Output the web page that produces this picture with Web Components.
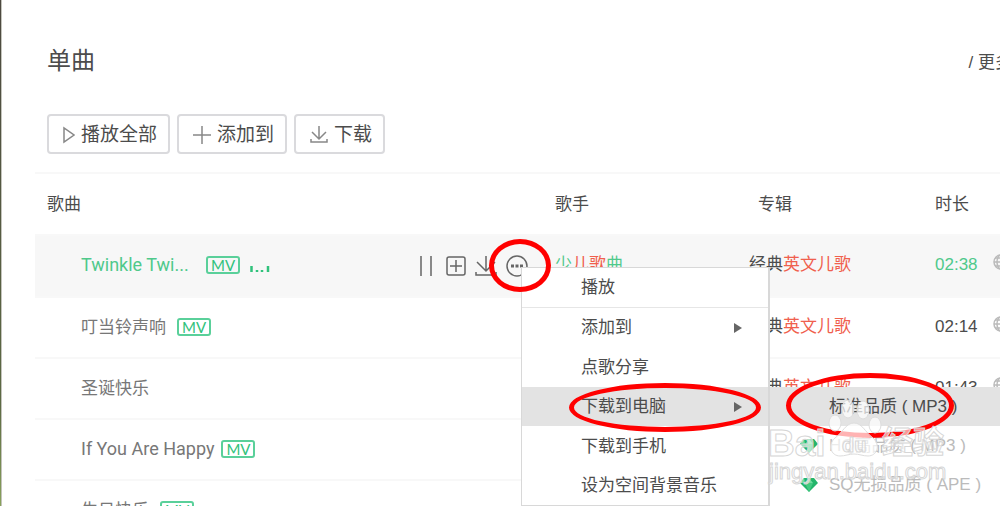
<!DOCTYPE html>
<html lang="zh-CN">
<head>
<meta charset="utf-8">
<title>单曲</title>
<style>
body{margin:0;height:100vh;overflow:hidden;background:#fff;font:17px/24px "Liberation Sans","Noto Sans CJK SC",sans-serif;color:#4c4c4c}
</style>
</head>
<body>
<music-page></music-page>
<script>
const define=(name,html,init)=>customElements.define(name,class extends HTMLElement{
  constructor(){super();const r=this.attachShadow({mode:'open'});r.innerHTML=html;this.root=r;}
  connectedCallback(){if(init&&!this.ready){this.ready=true;init(this,this.root);}}
});

const ICONS={
  play:[12,18,'<path d="M1 2v14l10-7z"/>'],
  plus:[18,18,'<path d="M9 0v18M0 9h18"/>'],
  down:[18,18,'<path d="M9 0v13M2 6l7 7 7-7M1 13v3h16v-3"/>'],
  pause:[12,20,'<path d="M1 0v20M11 0v20"/>'],
  add:[20,20,'<rect x="1" y="1" width="18" height="18" rx="2"/><path d="M10 4v12M4 10h12"/>'],
  get:[22,20,'<path d="M11 0v15M2 6l9 9 9-9M1 16v3h20v-3"/>'],
  more:[22,22,'<circle cx="11" cy="11" r="10"/><path stroke-width="3" d="M5 11h3M9.500 11h3M14 11h3"/>'],
  globe:[16,16,'<circle cx="8" cy="8" r="7"/><path d="M1 8h14M8 1v14M2 4h12M2 12h12"/><ellipse cx="8" cy="8" rx="4" ry="7"/>'],
  arrow:[8,12,'<path d="M0 1l8 5-8 5z" fill="#666" stroke="none"/>'],
  wave:[20,20,'<path d="M1.500 11v6M7 15v2M12 15v2M18 11v6" stroke="#31c27c" stroke-width="2.500"/>'],
  gem:[18,16,'<g stroke="none"><path d="M4 1h10l4 5-9 9-9-9z" fill="#23b56b"/><path d="M4 1l-4 5h5zM9 1L5 6h8z" fill="#6fdc9f"/><path d="M5 6h8l-4 9z" fill="#43ca82"/></g>']
};
define('line-icon','<style>:host{display:inline-flex;flex:none}svg{display:block;fill:none;stroke:currentColor;stroke-width:1.500}</style><svg aria-hidden="true"></svg>',(el,r)=>{
  const [w,h,d]=ICONS[el.getAttribute('name')];const s=r.querySelector('svg');
  s.setAttribute('width',w);s.setAttribute('height',h);s.setAttribute('viewBox',`0 0 ${w} ${h}`);s.innerHTML=d;
});

define('tool-button',`<style>
:host{display:block}
button{box-sizing:border-box;height:40px;display:flex;align-items:center;gap:6px;padding:1px 11px 0 14px;border:2px solid #dadadd;border-radius:4px;background:#fff;font:inherit;font-size:19px;color:#4c4c4c;white-space:nowrap}
line-icon{color:#888}
</style><button type="button"><slot></slot></button>`,(el,r)=>{
  const i=document.createElement('line-icon');i.setAttribute('name',el.getAttribute('icon'));r.querySelector('button').prepend(i);
});

define('mv-badge',`<style>:host{display:inline-block;flex:none}
a{box-sizing:border-box;display:block;width:34px;height:18px;border:2px solid #5ad09a;border-radius:3px;text-align:center;text-decoration:none;font:15px/14px Lato,sans-serif;color:#31c27c}
</style><a href="#mv">MV</a>`);

define('song-table',`<style>
:host{display:block}
table{width:100%;table-layout:fixed;border-collapse:collapse;text-align:left}
th,td{box-sizing:border-box;height:61px;padding:0 0 2px;font-weight:400;white-space:nowrap;border-top:2px solid #f8f8f8;vertical-align:middle}
th{height:62px;padding:2px 0 0}
.on td{height:62px}
col.song{width:508px}col.artist{width:206px}col.album{width:186px}col.time{width:58px}
th:first-child{padding-left:12px}
th:nth-child(2),td:nth-child(2){padding-left:12px}
th:nth-child(3){padding-left:9px}
td:first-child{padding-left:46px;color:#777}
.cell{display:flex;align-items:center}
.name{margin-right:11px;font-family:Roboto,"Noto Sans CJK SC",sans-serif}
.latin{font-size:18px;margin-right:7px}
.on .name{width:118px}
.on{background:#f7f7f7}
.on td:first-child,.on td:nth-child(2),.on td:nth-child(4){color:#4fc98b}
em{font-style:normal;color:#f0604d}
line-icon.wave{margin-left:10px}
line-icon.globe{color:#bbb}
.tools{display:flex;align-items:center;gap:9px;margin-left:auto;margin-right:15px;padding-top:2px;color:#666}
a{color:inherit;text-decoration:none}
button{border:0;background:none;padding:0;color:inherit;display:flex}
.tools button:first-child{margin-right:5px}
</style>
<table><colgroup><col class="song"><col class="artist"><col class="album"><col class="time"><col></colgroup>
<thead><tr><th>歌曲</th><th>歌手</th><th>专辑</th><th>时长</th><th></th></tr></thead><tbody></tbody></table>`,(el,r)=>{
  const songs=[['Twinkle Twi...','02:38',1,1],['叮当铃声响','02:14',1],['圣诞快乐','01:43',0],['If You Are Happy','02:05',1],['生日快乐','01:52',1]];
  const tool=(n,l)=>`<button type="button" aria-label="${l}"><line-icon name="${n}"></line-icon></button>`;
  r.querySelector('tbody').innerHTML=songs.map(([n,t,mv,on])=>`<tr class="${on?'on':''}"><td><div class="cell"><a class="name ${/[a-z]/.test(n)?'latin':''}" href="#song">${n}</a>${mv?'<mv-badge></mv-badge>':''}${on?`<line-icon class="wave" name="wave"></line-icon><div class="tools">${tool('pause','暂停')}${tool('add','添加')}${tool('get','下载')}${tool('more','更多')}</div>`:''}</div></td><td><a href="#artist">少<em>儿歌</em>曲</a></td><td><a href="#album">经典<em>英文儿歌</em></a></td><td>${t}</td><td><line-icon class="globe" name="globe"></line-icon></td></tr>`).join('');
});

define('menu-item',`<style>
:host{display:flex;flex:1;position:relative}
button{flex:1;display:flex;align-items:center;padding:2px 26px 0 59px;border:0;background:none;font:inherit;color:inherit;white-space:nowrap;text-align:left}
:host([active]) button{background:#e3e3e3}
:host([lined]) button{border-bottom:1px solid #e6e6e6}
:host([off]){color:#bbb}
.more{margin-left:auto}
.gem{position:absolute;left:30px;top:12px}
</style><button type="button"><slot></slot></button><slot name="sub"></slot>`,(el,r)=>{
  const add=(n,c)=>{const i=document.createElement('line-icon');i.setAttribute('name',n);i.className=c;r.querySelector('button').append(i);};
  if(el.hasAttribute('more'))add('arrow','more');
  if(el.hasAttribute('gem'))add('gem','gem');
});
define('pop-menu',`<style>
:host{position:absolute;box-sizing:border-box;display:flex;flex-direction:column;background:#fff;border:1px solid #d8d8d8;border-right-width:2px}
</style><slot></slot>`);

define('red-ring',`<style>:host{position:absolute;box-sizing:border-box;border:5px solid #f00;border-radius:50%;pointer-events:none}</style>`);

define('water-mark',`<style>:host{position:absolute;pointer-events:none}svg{display:block}
text{fill:#fff;fill-opacity:.6;stroke:#d6d6d6;stroke-width:1;font-family:"Liberation Sans","Noto Sans CJK SC",sans-serif}
.b{font-weight:700}
.p{fill:#fff;fill-opacity:.7;stroke:#ddd}
</style><svg width="184" height="90" viewBox="0 0 184 90">
<g class="p"><ellipse cx="68" cy="24" rx="6" ry="8"/><ellipse cx="81" cy="10" rx="6" ry="9"/><ellipse cx="96" cy="11" rx="6" ry="9"/><ellipse cx="108" cy="26" rx="6" ry="8"/><path d="M87 24c8 0 11 9 19 15 8 7 4 18-5 18-5 0-9-2-14-2s-9 2-14 2c-9 0-13-11-5-18 8-6 11-15 19-15z"/></g>
<text class="b" x="1" y="57" font-size="37">Bai</text><text class="b" x="75" y="53" font-size="20">du</text><text class="b" x="115" y="54" font-size="31">经验</text>
<text x="2" y="80" font-size="22">jingyan.baidu.com</text></svg>`);

define('music-page',`<style>
:host{display:block;position:relative;box-sizing:border-box;height:100vh;overflow:hidden;padding:46px 0 0 34px;border-left:1px solid;border-image:linear-gradient(#4c4840,#5d6a44 80%,#8aa35d) 1;box-shadow:inset 1px 0 #c4c4bc}
header{display:flex;align-items:center;justify-content:space-between;padding-left:12px;margin-right:-12px;height:30px}
h1{margin:0;font-size:24px;font-weight:400;line-height:30px}
header a{color:inherit;text-decoration:none;font-size:17px;padding-top:3px}
nav{display:flex;gap:7px;padding:38px 0 18px 12px}
.main{left:521px;top:267px;width:249px;height:239px}
.sub{left:246px;top:0;width:262px;height:120px;padding-bottom:3px;border-width:0 0 0 2px}
.r1{left:489px;top:239px;width:62px;height:53px}
.r2{left:569px;top:383px;width:192px;height:49px}
.r3{left:786px;top:373px;width:168px;height:65px}
water-mark{left:767px;top:399px}
.over{position:absolute;left:-1px;top:0}
</style>
<header><h1>单曲</h1><a href="#more">/ 更多</a></header>
<nav><tool-button icon="play">播放全部</tool-button><tool-button icon="plus">添加到</tool-button><tool-button icon="down">下载</tool-button></nav>
<song-table></song-table>
<div class="over">
<pop-menu class="main">
<menu-item lined>播放</menu-item><menu-item more>添加到</menu-item><menu-item>点歌分享</menu-item>
<menu-item active more>下载到电脑<pop-menu slot="sub" class="sub"><menu-item active>标准品质 ( MP3 )</menu-item><menu-item off gem>HQ高品质 ( MP3 )</menu-item><menu-item off gem>SQ无损品质 ( APE )</menu-item></pop-menu></menu-item>
<menu-item>下载到手机</menu-item><menu-item>设为空间背景音乐</menu-item>
</pop-menu>
<red-ring class="r1"></red-ring><red-ring class="r2"></red-ring><red-ring class="r3"></red-ring>
<water-mark></water-mark>
</div>`);
</script>
</body>
</html>
